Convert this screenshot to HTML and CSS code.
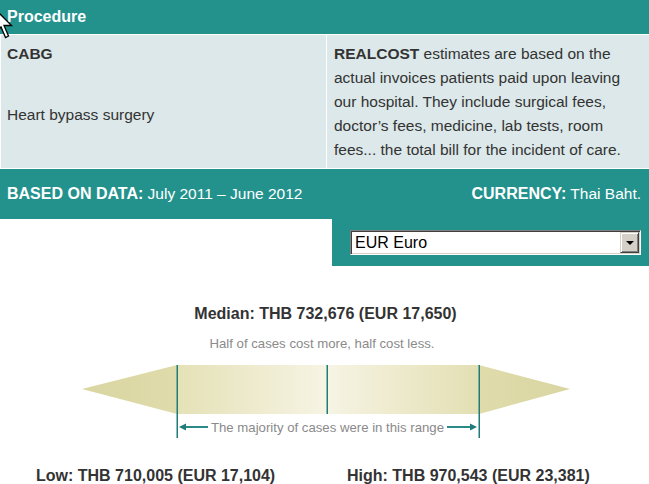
FILE: index.html
```html
<!DOCTYPE html>
<html>
<head>
<meta charset="utf-8">
<link rel="stylesheet" href="styles.css">
</head>
<body>
<div class="page">
  <div class="hdr">Procedure</div>
  <div class="cells">
    <div class="cell">
      <div class="code">CABG</div>
      <div class="name">Heart bypass surgery</div>
    </div>
    <div class="cell cell-r"><b>REALCOST</b> estimates are based on the actual invoices patients paid upon leaving our hospital. They include surgical fees, doctor’s fees, medicine, lab tests, room fees... the total bill for the incident of care.</div>
  </div>
  <div class="band">
    <div><b>BASED ON DATA:</b> July 2011 – June 2012</div>
    <div><b>CURRENCY:</b> Thai Baht.</div>
  </div>
  <div class="cur-row">
    <div class="cur">
      <div class="sel">
        <select class="sel-input"><option>EUR Euro</option></select>
        <span class="sel-btn"><span class="tri"></span></span>
      </div>
    </div>
  </div>
  <div class="median">Median: THB 732,676 (EUR 17,650)</div>
  <svg class="chart" width="649" height="118" viewBox="0 0 649 118">
    <defs>
      <linearGradient id="gl" x1="0" y1="0" x2="1" y2="0">
        <stop offset="0" stop-color="#e5e1b7"/>
        <stop offset="1" stop-color="#f6f4e4"/>
      </linearGradient>
      <linearGradient id="gr" x1="0" y1="0" x2="1" y2="0">
        <stop offset="0" stop-color="#f6f4e4"/>
        <stop offset="1" stop-color="#e3dfb3"/>
      </linearGradient>
      <linearGradient id="tl" x1="0" y1="0" x2="1" y2="0">
        <stop offset="0" stop-color="#dad6a2"/>
        <stop offset="1" stop-color="#dfdbab"/>
      </linearGradient>
      <linearGradient id="tr" x1="0" y1="0" x2="1" y2="0">
        <stop offset="0" stop-color="#dfdbab"/>
        <stop offset="1" stop-color="#dad6a2"/>
      </linearGradient>
    </defs>
    <text x="322" y="24" class="note" text-anchor="middle">Half of cases cost more, half cost less.</text>
    <polygon points="82,65 177,41 177,90" fill="url(#tl)"/>
    <polygon points="479,41 570,65 479,90" fill="url(#tr)"/>
    <rect x="177" y="41" width="150" height="49" fill="url(#gl)"/>
    <rect x="327" y="41" width="152" height="49" fill="url(#gr)"/>
    <rect x="176.5" y="41" width="1.5" height="73" fill="#1f7d79"/>
    <rect x="326.5" y="41" width="1.5" height="49" fill="#1f7d79"/>
    <rect x="478.5" y="41" width="1.5" height="73" fill="#1f7d79"/>
    <rect x="184" y="102" width="24" height="2" fill="#2a8a86"/>
    <polygon points="179,103 186,99.5 186,106.5" fill="#1f7d79"/>
    <rect x="447" y="102" width="24" height="2" fill="#2a8a86"/>
    <polygon points="477,103 470,99.5 470,106.5" fill="#1f7d79"/>
    <text x="327.5" y="107.5" class="note" text-anchor="middle">The majority of cases were in this range</text>
  </svg>
  <div class="range">
    <div>Low: THB 710,005 (EUR 17,104)</div>
    <div>High: THB 970,543 (EUR 23,381)</div>
  </div>
  <svg class="cursor" width="20" height="40" viewBox="0 0 20 40">
    <polygon points="-5,9 -5,33 1,27 5.5,37.5 8.5,36 4,25.5 11.5,25.5" fill="#fff" stroke="#000" stroke-width="1.3" stroke-linejoin="miter"/>
  </svg>
</div>
</body>
</html>
```
FILE: styles.css
```css
html, body {
  margin: 0;
  padding: 0;
  background: #fff;
}
.page {
  position: relative;
  width: 649px;
  height: 484px;
  overflow: hidden;
  font-family: "Liberation Sans", Arial, sans-serif;
  color: #333;
}
.hdr {
  background: #23928d;
  color: #fff;
  font-weight: bold;
  font-size: 16px;
  line-height: 34px;
  height: 34px;
  padding-left: 7px;
  border-bottom: 1px solid #fff;
}
.cells {
  display: grid;
  grid-template-columns: 325px 322px;
  column-gap: 1px;
  background: #fff;
  padding-left: 1px;
  border-bottom: 1px solid #fff;
}
.cell {
  background: #dce8e9;
  padding: 7px 7px 6px 6px;
  font-size: 15.5px;
  line-height: 24px;
}
.cell-r {
  padding-left: 7px;
}
.code {
  font-weight: bold;
}
.name {
  margin-top: 37px;
}
.band {
  background: #23928d;
  color: #fff;
  height: 50px;
  display: flex;
  justify-content: space-between;
  align-items: center;
  padding: 0 8px 0 7px;
  font-size: 15.5px;
}
.band b {
  font-size: 16px;
}
.cur-row {
  display: flex;
  justify-content: flex-end;
}
.cur {
  background: #23928d;
  width: 317px;
  height: 47px;
  box-sizing: border-box;
  padding: 11px 8px 11px 18px;
}
.sel {
  position: relative;
  width: 291px;
  height: 25px;
  box-sizing: border-box;
  border: 1px solid;
  border-color: #808080 #ffffff #ffffff #808080;
  box-shadow: inset 1px 1px 0 #404040, inset -1px -1px 0 #d4d0c8;
  background: #fff;
}
.sel-input {
  appearance: none;
  -webkit-appearance: none;
  border: none;
  outline: none;
  background: transparent;
  margin: 1px;
  width: 287px;
  height: 21px;
  padding: 0 0 0 3px;
  font-family: "Liberation Sans", Arial, sans-serif;
  font-size: 16px;
  color: #000;
  line-height: 21px;
}
.sel-btn {
  position: absolute;
  right: 1px;
  top: 1px;
  width: 19px;
  height: 21px;
  box-sizing: border-box;
  background: #d4d0c8;
  border: 1px solid;
  border-color: #d4d0c8 #404040 #404040 #d4d0c8;
  box-shadow: inset 1px 1px 0 #fff, inset -1px -1px 0 #808080;
  display: flex;
  align-items: center;
  justify-content: center;
}
.tri {
  width: 0;
  height: 0;
  border-left: 4px solid transparent;
  border-right: 4px solid transparent;
  border-top: 4px solid #000;
  margin-top: 1px;
}
.median {
  margin-top: 38px;
  text-align: center;
  font-weight: bold;
  font-size: 16px;
  line-height: 20px;
  padding-left: 2px;
}
.chart {
  display: block;
}
.note {
  font-family: "Liberation Sans", Arial, sans-serif;
  font-size: 13.2px;
  fill: #8a8a8a;
}
.range {
  display: grid;
  grid-template-columns: 311px 1fr;
  padding-left: 36px;
  margin-top: 24px;
  font-weight: bold;
  font-size: 16px;
  line-height: 20px;
}
.cursor {
  position: absolute;
  left: 0;
  top: 0;
  overflow: hidden;
}
```
